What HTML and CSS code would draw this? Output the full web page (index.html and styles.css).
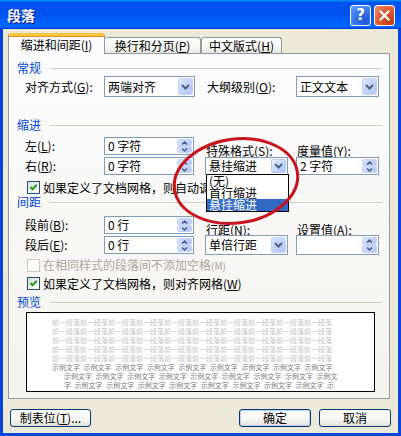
FILE: index.html
```html
<!DOCTYPE html>
<html>
<head>
<meta charset="utf-8">
<title>段落</title>
<link rel="stylesheet" href="styles.css">
</head>
<body>
<div class="window">
  <div class="titlebar">
    <span class="title">段落</span>
    <div class="tb-buttons">
      <div class="tb-btn help">?</div>
      <div class="tb-btn close"><svg width="11" height="11" viewBox="0 0 11 11"><path d="M1.5 1.5L9.5 9.5M9.5 1.5L1.5 9.5" stroke="#fff" stroke-width="2.2" stroke-linecap="square"/></svg></div>
    </div>
  </div>
  <div class="frame">
    <div class="tabs">
      <div class="tab active">缩进和间距(<u>I</u>)</div>
      <div class="tab t2">换行和分页(<u>P</u>)</div>
      <div class="tab t3">中文版式(<u>H</u>)</div>
    </div>
    <div class="panel">
      <div class="group-title g-general"><span>常规</span></div>
      <div class="fgrid onerow">
        <span class="lbl">对齐方式(<u>G</u>):</span>
        <div class="combo tall w91"><span class="val">两端对齐</span><span class="dd"><svg width="9" height="6" viewBox="0 0 9 6"><path d="M1 1l3.5 3.5L8 1" fill="none" stroke="#4d6185" stroke-width="2"/></svg></span></div>
        <span class="lbl pad2">大纲级别(<u>O</u>):</span>
        <div class="combo tall w83"><span class="val">正文文本</span><span class="dd"><svg width="9" height="6" viewBox="0 0 9 6"><path d="M1 1l3.5 3.5L8 1" fill="none" stroke="#4d6185" stroke-width="2"/></svg></span></div>
      </div>

      <div class="group-title g-indent"><span>缩进</span></div>
      <div class="fgrid tworow g-indent-grid">
        <span class="lbl">左(<u>L</u>):</span>
        <div class="spin w90"><span class="val">0 字符</span><span class="sb"><span class="sbh"><svg width="7" height="4" viewBox="0 0 7 4"><path d="M1 3.5l2.5-2.5L6 3.5" fill="none" stroke="#4d6185" stroke-width="1.5"/></svg></span><span class="sbh"><svg width="7" height="4" viewBox="0 0 7 4"><path d="M1 0.5l2.5 2.5L6 0.5" fill="none" stroke="#4d6185" stroke-width="1.5"/></svg></span></span></div>
        <span class="lbl pad1 lowlbl">特殊格式(<u>S</u>):</span>
        <span class="lbl pad1 lowlbl">度量值(<u>Y</u>):</span>

        <span class="lbl">右(<u>R</u>):</span>
        <div class="spin w90"><span class="val">0 字符</span><span class="sb"><span class="sbh"><svg width="7" height="4" viewBox="0 0 7 4"><path d="M1 3.5l2.5-2.5L6 3.5" fill="none" stroke="#4d6185" stroke-width="1.5"/></svg></span><span class="sbh"><svg width="7" height="4" viewBox="0 0 7 4"><path d="M1 0.5l2.5 2.5L6 0.5" fill="none" stroke="#4d6185" stroke-width="1.5"/></svg></span></span></div>
        <div class="combo w83 open"><span class="val">悬挂缩进</span><span class="dd hot"><svg width="9" height="6" viewBox="0 0 9 6"><path d="M1 1l3.5 3.5L8 1" fill="none" stroke="#4d6185" stroke-width="2"/></svg></span>
          <div class="dd-list">
            <div class="dd-item">(无)</div>
            <div class="dd-item">首行缩进</div>
            <div class="dd-item sel">悬挂缩进</div>
          </div>
        </div>
        <div class="spin w83"><span class="val">2 字符</span><span class="sb"><span class="sbh"><svg width="7" height="4" viewBox="0 0 7 4"><path d="M1 3.5l2.5-2.5L6 3.5" fill="none" stroke="#4d6185" stroke-width="1.5"/></svg></span><span class="sbh"><svg width="7" height="4" viewBox="0 0 7 4"><path d="M1 0.5l2.5 2.5L6 0.5" fill="none" stroke="#4d6185" stroke-width="1.5"/></svg></span></span></div>
      </div>
      <div class="check-row c-auto"><span class="cb"><svg width="11" height="11" viewBox="0 0 11 11"><path d="M2.5 5l2 2.2L8.8 2.8" fill="none" stroke="#21a121" stroke-width="2"/></svg></span><span>如果定义了文档网格，则自动调整右缩进(<u>D</u>)</span></div>

      <div class="group-title g-space"><span>间距</span></div>
      <div class="fgrid tworow g-space-grid">
        <span class="lbl">段前(<u>B</u>):</span>
        <div class="spin w90"><span class="val">0 行</span><span class="sb"><span class="sbh"><svg width="7" height="4" viewBox="0 0 7 4"><path d="M1 3.5l2.5-2.5L6 3.5" fill="none" stroke="#4d6185" stroke-width="1.5"/></svg></span><span class="sbh"><svg width="7" height="4" viewBox="0 0 7 4"><path d="M1 0.5l2.5 2.5L6 0.5" fill="none" stroke="#4d6185" stroke-width="1.5"/></svg></span></span></div>
        <span class="lbl pad1 lowlbl">行距(<u>N</u>):</span>
        <span class="lbl pad1 lowlbl">设置值(<u>A</u>):</span>

        <span class="lbl">段后(<u>E</u>):</span>
        <div class="spin w90"><span class="val">0 行</span><span class="sb"><span class="sbh"><svg width="7" height="4" viewBox="0 0 7 4"><path d="M1 3.5l2.5-2.5L6 3.5" fill="none" stroke="#4d6185" stroke-width="1.5"/></svg></span><span class="sbh"><svg width="7" height="4" viewBox="0 0 7 4"><path d="M1 0.5l2.5 2.5L6 0.5" fill="none" stroke="#4d6185" stroke-width="1.5"/></svg></span></span></div>
        <div class="combo w83 mid"><span class="val">单倍行距</span><span class="dd"><svg width="9" height="6" viewBox="0 0 9 6"><path d="M1 1l3.5 3.5L8 1" fill="none" stroke="#4d6185" stroke-width="2"/></svg></span></div>
        <div class="spin w83 mid"><span class="val"></span><span class="sb"><span class="sbh"><svg width="7" height="4" viewBox="0 0 7 4"><path d="M1 3.5l2.5-2.5L6 3.5" fill="none" stroke="#4d6185" stroke-width="1.5"/></svg></span><span class="sbh"><svg width="7" height="4" viewBox="0 0 7 4"><path d="M1 0.5l2.5 2.5L6 0.5" fill="none" stroke="#4d6185" stroke-width="1.5"/></svg></span></span></div>
      </div>
      <div class="check-row c-nospace disabled"><span class="cb off"></span><span>在相同样式的段落间不添加空格<span class="small">(M)</span></span></div>
      <div class="check-row c-grid"><span class="cb"><svg width="11" height="11" viewBox="0 0 11 11"><path d="M2.5 5l2 2.2L8.8 2.8" fill="none" stroke="#21a121" stroke-width="2"/></svg></span><span>如果定义了文档网格，则对齐网格(<u>W</u>)</span></div>

      <div class="group-title g-preview"><span>预览</span></div>
      <div class="preview">
        <div class="pl prev">前一段落前一段落前一段落前一段落前一段落前一段落前一段落前一段落前一段落前一段落</div>
        <div class="pl prev">前一段落前一段落前一段落前一段落前一段落前一段落前一段落前一段落前一段落前一段落</div>
        <div class="pl prev">前一段落前一段落前一段落前一段落前一段落前一段落前一段落前一段落前一段落前一段落</div>
        <div class="pl prev">前一段落前一段落前一段落前一段落前一段落前一段落前一段落前一段落前一段落前一段落</div>
        <div class="pl prev">前一段落前一段落前一段落前一段落前一段落前一段落前一段落前一段落前一段落前一段落</div>
        <div class="pl sample">示例文字 示例文字 示例文字 示例文字 示例文字 示例文字 示例文字 示例文字 示例文字</div>
        <div class="pl sample hang">示例文字 示例文字 示例文字 示例文字 示例文字 示例文字 示例文字 示例文字 示例文</div>
        <div class="pl sample hang">字 示例文字 示例文字 示例文字 示例文字 示例文字 示例文字 示例文字 示例文字 示</div>
      </div>
    </div>
    <div class="buttons">
      <div class="btn b-tabs">制表位(<u>T</u>)...</div>
      <div class="btn b-ok">确定</div>
      <div class="btn b-cancel">取消</div>
    </div>
  </div>
  <svg class="annot" width="401" height="436" viewBox="0 0 401 436"><ellipse cx="236" cy="181" rx="62" ry="42" transform="rotate(-8 236 181)" fill="none" stroke="#c8141c" stroke-width="3"/></svg>
</div>
</body>
</html>
```
FILE: styles.css
```css
* { box-sizing: border-box; }
html, body { margin: 0; padding: 0; }
body {
  width: 401px; height: 436px; overflow: hidden;
  font-family: "Noto Sans CJK SC", "Noto Sans CJK JP", sans-serif;
  font-size: 12px; color: #000;
}
u { text-decoration: underline; text-underline-offset: 1px; }

.window {
  width: 401px; height: 436px; position: relative;
  background: #ece9d8; display: flex; flex-direction: column;
}
.titlebar {
  height: 29px; flex: none; display: flex; align-items: center;
  padding: 0 6px 0 7px;
  background: linear-gradient(180deg,#0997ff,#0053ee 8%,#0050ee 40%,#0066ff 88%,#0066ff 93%,#005bff 95%,#003dd7 96%,#003dd7);
}
.title {
  flex: 1; color: #fff; font-weight: bold; font-size: 14px; line-height: 14px;
  text-shadow: 1px 1px #0f1089;
}
.tb-buttons { display: flex; gap: 3px; margin-top: 1px; }
.tb-btn {
  width: 21px; height: 21px; border: 1px solid #fff; border-radius: 3px;
  display: flex; align-items: center; justify-content: center;
}
.help {
  background: radial-gradient(circle at 75% 80%, #1f55d8 0%, #3b78ee 55%, #6fa2fb 100%);
  color: #fff; font: bold 15px "DejaVu Sans", sans-serif; line-height: 15px;
}
.close {
  background: radial-gradient(circle at 80% 85%, #c23c16 0%, #e05a32 55%, #f29478 100%);
}

.frame {
  flex: 1; display: flex; flex-direction: column;
  border: 3px solid #0a46dc; border-top: 0;
  padding: 4px 0 0 5px;
}
.tabs { height: 20px; display: flex; align-items: flex-end; }
.tab {
  height: 16px; border: 1px solid #919b9c; border-bottom: 0;
  border-radius: 3px 3px 0 0;
  background: linear-gradient(#ffffff, #f3f3ef 70%, #e6e5df);
  display: flex; align-items: center; justify-content: center;
  line-height: 12px; white-space: nowrap;
}
.tab.active {
  position: relative; z-index: 1;
  width: 97px; height: 21px; margin-bottom: -1px;
  background: #fcfcfe;
  border-top: 3px solid #ffc83c;
  box-shadow: inset 0 1px 0 #e68b2c;
  padding-bottom: 1px;
}
.tab.t2 { width: 96px; border-left: 0; }
.tab.t3 { width: 81px; border-left: 1px solid #919b9c; margin-left: 0; }

.panel {
  width: 382px; height: 346px; flex: none;
  border: 1px solid #919b9c;
  background: linear-gradient(#fcfcfe, #f4f3ee);
  padding: 0 7px 0 8px;
}
.group-title {
  display: flex; align-items: center; height: 12px; line-height: 12px;
  color: #0046d5;
}
.group-title::after {
  content: ""; flex: 1; height: 0; border-top: 1px solid #d0d0bf; margin-left: 9px;
}
.g-general { margin-top: 8px; }
.g-indent { margin-top: 22px; }
.g-space { margin-top: 2px; }
.g-preview { margin-top: 6px; }

.fgrid {
  display: grid; margin-left: 8px;
  grid-template-columns: 79px 101px 91px 83px;
}
.onerow { grid-template-rows: 21px; margin-top: 2px; }
.tworow { grid-template-rows: 18px 18px; row-gap: 2px; }
.g-indent-grid { margin-top: 6px; }
.g-space-grid { margin-top: 8px; }
.lbl { align-self: center; white-space: nowrap; line-height: 12px; }
.pad2 { padding-left: 2px; }
.pad1 { padding-left: 1px; }
.lowlbl { align-self: end; margin-bottom: -2px; }

.combo, .spin {
  position: relative; display: flex; align-items: stretch;
  border: 1px solid #7f9db9; background: #fff; height: 18px;
}
.combo.tall { height: 21px; }
.mid { height: 20px; margin-top: -1px; }
.w91 { width: 91px; }
.w90 { width: 90px; }
.w83 { width: 83px; }
.val {
  flex: 1; padding-left: 3px; display: flex; align-items: center;
  line-height: 12px; white-space: nowrap;
}
.dd {
  width: 15px; margin: 1px; border-radius: 2px;
  background: linear-gradient(135deg, #dce6fe 0%, #c3d3fb 50%, #b2c6f6 100%);
  border: 1px solid #c6d3f5;
  display: flex; align-items: center; justify-content: center;
}
.dd.hot {
  background: linear-gradient(135deg, #eef3ff 0%, #c9d9ff 50%, #a9c1fa 100%);
  border-color: #b7c9f4;
}
.sb { width: 15px; margin: 1px; display: flex; flex-direction: column; gap: 0; }
.sbh {
  flex: 1; border-radius: 2px;
  background: linear-gradient(135deg, #dce6fe 0%, #c3d3fb 50%, #b2c6f6 100%);
  border: 1px solid #c6d3f5;
  display: flex; align-items: center; justify-content: center;
}

.dd-list {
  position: absolute; z-index: 5; left: 0; top: 100%;
  width: 83px; border: 1px solid #000; background: #fff;
}
.dd-item { height: 12px; line-height: 12px; padding-left: 2px; white-space: nowrap; }
.dd-item.sel { background: #316ac5; color: #fff; }

.check-row {
  display: flex; align-items: center; gap: 3px; height: 13px;
  margin-left: 10px; line-height: 12px; white-space: nowrap;
}
.c-auto { margin-top: 6px; }
.c-nospace { margin-top: 5px; }
.c-grid { margin-top: 5px; }
.cb {
  width: 13px; height: 13px; flex: none;
  border: 1px solid #1c5180;
  background: linear-gradient(135deg, #dcdcd7, #ffffff);
  display: flex; align-items: center; justify-content: center;
}
.cb.off { border-color: #cac8bb; background: #fff; }
.disabled { color: #aca899; }
.small { font-size: 10px; }

.preview {
  margin-top: 4px; margin-left: 9px;
  width: 349px; height: 80px; border: 1px solid #000; background: #fff;
  padding: 5px 0 0 25px; overflow: hidden;
}
.pl {
  font-size: 7px; line-height: 9px; height: 9px; white-space: nowrap;
  word-spacing: 2px;
}
.prev { color: #c4c4c4; }
.sample { color: #7a7a7a; }
.hang { padding-left: 12px; }

.buttons {
  margin-top: 10px; height: 18px; display: flex; padding-left: 2px;
}
.btn {
  height: 18px; border: 1px solid #003c74; border-radius: 3px;
  background: linear-gradient(#ffffff, #f4f4f0 60%, #e3e0d6);
  display: flex; align-items: center; justify-content: center;
  line-height: 12px; white-space: nowrap;
}
.b-tabs { width: 81px; }
.b-ok { width: 72px; margin-left: auto; box-shadow: inset 0 0 0 1px #bcd0f6; }
.b-cancel { width: 72px; margin-left: 8px; margin-right: 7px; }

.annot { position: absolute; left: 0; top: 0; z-index: 10; pointer-events: none; }
```
